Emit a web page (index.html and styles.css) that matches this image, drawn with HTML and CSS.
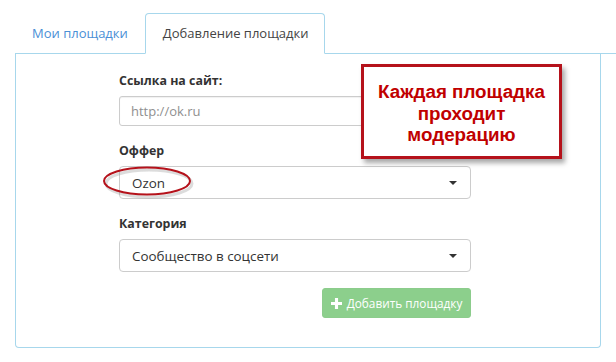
FILE: index.html
```html
<!DOCTYPE html>
<html lang="ru">
<head>
<meta charset="utf-8">
<link rel="stylesheet" href="styles.css">
</head>
<body>
<div class="page">
  <ul class="tabs">
    <li class="tab">Мои площадки</li>
    <li class="tab active">Добавление площадки</li>
  </ul>
  <div class="panel">
    <form class="form">
      <div class="group">
        <label class="label">Ссылка на сайт:</label>
        <div class="input placeholder">http://ok.ru</div>
      </div>
      <div class="group">
        <label class="label">Оффер</label>
        <div class="select"><span>Ozon</span><span class="caret"></span></div>
      </div>
      <div class="group">
        <label class="label">Категория</label>
        <div class="select"><span>Сообщество в соцсети</span><span class="caret"></span></div>
      </div>
      <div class="actions">
        <button type="button" class="btn"><svg class="plus" viewBox="0 0 12 12" width="11" height="11"><path d="M4.3 0h3.4v4.3H12v3.4H7.7V12H4.3V7.7H0V4.3h4.3z" fill="#fff"/></svg>Добавить площадку</button>
      </div>
    </form>
  </div>
  <div class="callout">Каждая площадка проходит модерацию</div>
  <svg class="ring" width="96" height="38" viewBox="0 0 96 38">
    <ellipse cx="46" cy="18" rx="43" ry="13.5" fill="none" stroke="#9a9a9a" stroke-opacity="0.35" stroke-width="3" transform="translate(2 2.5)"/>
    <ellipse cx="46" cy="18" rx="43" ry="13.5" fill="none" stroke="#b5121b" stroke-width="2"/>
  </svg>
</div>
</body>
</html>
```
FILE: styles.css
```css
html, body {
  margin: 0;
  padding: 0;
  background: #fff;
}
body {
  font-family: "Open Sans", "Liberation Sans", sans-serif;
  font-size: 14px;
  color: #333;
}
.page {
  position: relative;
  padding: 13px 0 0 15px;
  width: 601px;
}
.tabs {
  list-style: none;
  margin: 0;
  padding: 0 0 0 1px;
  display: flex;
  border-bottom: 1px solid #a7d7ec;
}
.tab {
  padding: 9px 15px 10px;
  line-height: 20px;
  font-size: 13px;
  margin-right: 1px;
  margin-bottom: -1px;
  border: 1px solid transparent;
  border-radius: 4px 4px 0 0;
  color: #4a8fd6;
}
.tab.active {
  padding: 9px 15px 10px 17px;
  color: #444;
  background: #fff;
  border-color: #a7d7ec;
  border-bottom-color: #fff;
}
.panel {
  border: 1px solid #a7d7ec;
  border-top: none;
  border-radius: 0 0 4px 4px;
  padding: 17px 0 29px 103px;
  box-sizing: border-box;
  width: 586px;
}
.form {
  width: 352px;
}
.group {
  margin-bottom: 15px;
}
.label {
  display: block;
  font-weight: 700;
  font-size: 12.4px;
  line-height: 20px;
  margin-bottom: 5px;
  color: #333;
}
.input {
  height: 30px;
  box-sizing: border-box;
  border: 1px solid #ccc;
  border-radius: 3px;
  padding: 0 11px;
  line-height: 28px;
  font-size: 13px;
  color: #8f8f8f;
  box-shadow: inset 0 1px 1px rgba(0,0,0,0.06);
}
.select {
  height: 33px;
  box-sizing: border-box;
  border: 1px solid #ccc;
  border-radius: 4px;
  padding: 0 12px;
  display: flex;
  align-items: center;
  justify-content: space-between;
  font-size: 13.4px;
  color: #333;
}
.caret {
  width: 0;
  height: 0;
  border-left: 4px solid transparent;
  border-right: 4px solid transparent;
  border-top: 4px solid #333;
  margin-right: 1px;
}
.actions {
  display: flex;
  justify-content: flex-end;
  padding-top: 1px;
}
.btn {
  width: 149px;
  height: 30px;
  border: 1px solid #8ccc8c;
  border-radius: 3px;
  background: #8ccf8c;
  color: #fff;
  font-family: "Open Sans", "Liberation Sans", sans-serif;
  font-size: 11.8px;
  display: flex;
  align-items: center;
  justify-content: center;
  gap: 5px;
  padding: 0;
}
.callout {
  position: absolute;
  left: 361px;
  top: 64px;
  width: 201px;
  height: 95px;
  box-sizing: border-box;
  border: 3px solid #b5121b;
  background: #fff;
  box-shadow: 3px 4px 5px rgba(0,0,0,0.35);
  color: #c00000;
  font-family: "Liberation Sans", Arial, sans-serif;
  font-weight: 700;
  font-size: 18.8px;
  line-height: 21.5px;
  text-align: center;
  padding: 14px 6px 0;
}
.ring {
  position: absolute;
  left: 101px;
  top: 163px;
}
```
